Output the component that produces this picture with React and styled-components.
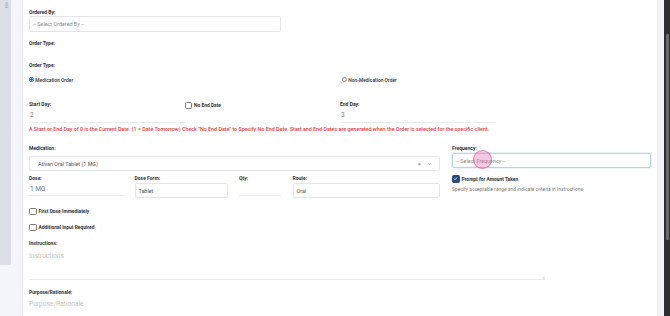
import React from "react";
import styled, { createGlobalStyle } from "styled-components";

const GlobalStyle = createGlobalStyle`
  html, body {
    margin: 0;
    padding: 0;
    background: #f4f5fa;
    font-family: Roboto, "Liberation Sans", Arial, sans-serif;
  }
`;

const Page = styled.div`
  display: flex;
  width: 670px;
  height: 316px;
  overflow: hidden;
  background: #f4f5fa;
`;

const Sidebar = styled.div`
  width: 11px;
  height: 265px;
  flex-shrink: 0;
  background: #dcdfe8;
  display: flex;
  justify-content: center;
  padding-top: 2px;
  box-sizing: border-box;
`;

const SideText = styled.span`
  writing-mode: vertical-rl;
  font-size: 2.6px;
  letter-spacing: 0.2px;
  color: #8a8f9c;
  height: 12px;
`;

const Gutter = styled.div`
  width: 11px;
  flex-shrink: 0;
`;

const Panel = styled.div`
  width: 635px;
  flex-shrink: 0;
  box-sizing: border-box;
  background: #fff;
  border-left: 1px solid #e7e8ef;
  padding: 8.5px 6px 0 6px;
  overflow: hidden;
`;

const RightStrip = styled.div`
  width: 7px;
  flex-shrink: 0;
  background: #f2f3fa;
`;

const Scrollbar = styled.div`
  width: 6px;
  flex-shrink: 0;
  background: #2d2d2d;
  padding-top: 34px;
  box-sizing: border-box;
`;

const Thumb = styled.div`
  width: 3px;
  height: 206px;
  margin-left: 2px;
  border-radius: 1px;
  background: #6b6b6b;
`;

const Label = styled.div`
  font-size: 5px;
  font-weight: 700;
  line-height: 6px;
  height: 6px;
  color: #333;
  white-space: nowrap;
  margin-top: ${({ $mt }) => $mt || 0}px;
`;

const SelectBox = styled.div`
  position: relative;
  box-sizing: border-box;
  width: ${({ $w }) => ($w ? `${$w}px` : "100%")};
  height: ${({ $h }) => $h || 16}px;
  margin-top: ${({ $mt }) => $mt || 0}px;
  border: 1px solid ${({ $focus }) => ($focus ? "#b9cdee" : "#e4e5ea")};
  border-radius: 2px;
  display: flex;
  align-items: center;
  padding: 0 ${({ $pl }) => $pl || 3}px;
  font-size: 5.4px;
  color: ${({ $value }) => ($value ? "#555" : "#8a8a8a")};
  white-space: nowrap;
  box-shadow: ${({ $focus }) => ($focus ? "0 0 0 0.5px #dbe6f7" : "none")};
`;

const SelectText = styled.span`
  flex: 1;
`;

const ClearMark = styled.span`
  font-size: 5.5px;
  color: #666;
  margin-right: 7px;
`;

const Spacer = styled.div`
  height: ${({ $h }) => $h}px;
`;

const RadioRow = styled.div`
  display: grid;
  grid-template-columns: 313px auto;
  margin-top: 9px;
  height: 6px;
`;

const RadioItem = styled.label`
  display: flex;
  align-items: center;
  gap: 1.5px;
  font-size: 4.9px;
  font-weight: 500;
  color: #333;
  white-space: nowrap;
`;

const RadioDot = styled.span`
  width: 4.8px;
  height: 4.8px;
  box-sizing: border-box;
  border-radius: 50%;
  border: ${({ $on }) => ($on ? "0.8px solid #1a6fe0" : "0.6px solid #8d8d8d")};
  background: ${({ $on }) =>
    $on ? "radial-gradient(circle, #1a6fe0 0 1.1px, #fff 1.3px)" : "#fff"};
`;

const DayRow = styled.div`
  display: grid;
  grid-template-columns: repeat(4, 155.5px);
  margin-top: 18px;
`;

const Col = styled.div`
  display: flex;
  flex-direction: column;
`;

const UnderInput = styled.div`
  box-sizing: border-box;
  width: ${({ $w }) => ($w ? `${$w}px` : "100%")};
  height: ${({ $h }) => $h || 15}px;
  margin-top: ${({ $mt }) => $mt || 0}px;
  border-bottom: 1px solid #ececee;
  display: flex;
  align-items: center;
  padding-left: ${({ $pl }) => $pl ?? 1}px;
  font-size: 6.6px;
  color: #777;
`;

const CheckRow = styled.label`
  display: flex;
  align-items: center;
  gap: 2px;
  height: 7.5px;
  margin-top: ${({ $mt }) => $mt || 0}px;
  font-size: 4.9px;
  font-weight: 700;
  color: #333;
  white-space: nowrap;
`;

const Box = styled.span`
  width: 7.5px;
  height: 7.5px;
  box-sizing: border-box;
  flex-shrink: 0;
  border-radius: 1.5px;
  border: 0.8px solid ${({ $on }) => ($on ? "#2b4a7d" : "#7a7a7a")};
  background: ${({ $on }) => ($on ? "#2b4a7d" : "#fff")};
  display: flex;
  align-items: center;
  justify-content: center;
`;

const Warning = styled.div`
  margin-top: 3.5px;
  font-size: 5.35px;
  font-weight: 500;
  line-height: 6px;
  color: #e23b40;
  white-space: nowrap;
`;

const MedGrid = styled.div`
  display: grid;
  grid-template-columns: 411px 199px;
  column-gap: 12px;
  margin-top: 13px;
`;

const DoseGrid = styled.div`
  display: grid;
  grid-template-columns: 94px 93px 42px 147px;
  column-gap: 11.5px;
  margin-top: 4px;
`;

const Hint = styled.div`
  margin-top: 3px;
  font-size: 4.9px;
  line-height: 6px;
  color: #7b7b7b;
  white-space: nowrap;
`;

const FieldWrap = styled.div`
  position: relative;
`;

const Pointer = styled.span`
  position: absolute;
  left: 21px;
  top: -1.5px;
  width: 19px;
  height: 19px;
  border-radius: 50%;
  background: rgba(232, 110, 175, 0.38);
  border: 0.8px solid rgba(214, 80, 150, 0.55);
  box-sizing: border-box;
`;

const TextArea = styled.div`
  position: relative;
  box-sizing: border-box;
  width: 516px;
  height: 31px;
  margin-top: 3px;
  border-bottom: 1px solid #ececee;
  padding-top: 3px;
  font-size: 6.6px;
  line-height: 8px;
  color: #c2c2c2;
`;

const Grip = styled.svg`
  position: absolute;
  right: 0;
  bottom: 0;
`;

const PlainInput = styled.div`
  margin-top: 5.5px;
  font-size: 6.6px;
  line-height: 8px;
  color: #c2c2c2;
`;

const Chevron = () => (
  <svg width="3" height="2" viewBox="0 0 6 4">
    <path d="M1 1l2 2 2-2" fill="none" stroke="#777" strokeWidth="1" />
  </svg>
);

const Check = () => (
  <svg width="5" height="5" viewBox="0 0 10 10">
    <path d="M2 5.2l2.1 2.1L8.2 3" fill="none" stroke="#fff" strokeWidth="1.8" />
  </svg>
);

const Checkbox = ({ on, children, mt }) => (
  <CheckRow $mt={mt}>
    <Box $on={on}>{on && <Check />}</Box>
    {children}
  </CheckRow>
);

export default function App() {
  return (
    <>
      <GlobalStyle />
      <Page>
        <Sidebar>
          <SideText>HIDE</SideText>
        </Sidebar>
        <Gutter />
        <Panel>
          <Label>Ordered By:</Label>
          <SelectBox $w={252} $mt={1}>-- Select Ordered By --</SelectBox>

          <Label $mt={8}>Order Type:</Label>
          <Spacer $h={16} />
          <Label>Order Type:</Label>

          <RadioRow>
            <RadioItem>
              <RadioDot $on />
              Medication Order
            </RadioItem>
            <RadioItem>
              <RadioDot />
              Non-Medication Order
            </RadioItem>
          </RadioRow>

          <DayRow>
            <Col>
              <Label>Start Day:</Label>
              <UnderInput $mt={1}>2</UnderInput>
            </Col>
            <Col>
              <Checkbox on={false} mt={1}>No End Date</Checkbox>
            </Col>
            <Col>
              <Label>End Day:</Label>
              <UnderInput $mt={1}>3</UnderInput>
            </Col>
          </DayRow>

          <Warning>
            A Start or End Day of 0 is the Current Date. (1 = Date Tomorrow) Check "No End Date" to Specify No End Date. Start and End Dates are generated when the Order is selected for the specific client.
          </Warning>

          <MedGrid>
            <Col>
              <Label>Medication:</Label>
              <SelectBox $mt={5} $h={15} $pl={8} $value>
                <SelectText>Ativan Oral Tablet (1 MG)</SelectText>
                <ClearMark>×</ClearMark>
                <Chevron />
              </SelectBox>
              <DoseGrid>
                <Col>
                  <Label>Dose:</Label>
                  <UnderInput $mt={1} $h={14}>1 MG</UnderInput>
                </Col>
                <Col>
                  <Label>Dose Form:</Label>
                  <SelectBox $mt={2} $h={15} $value>Tablet</SelectBox>
                </Col>
                <Col>
                  <Label>Qty:</Label>
                  <UnderInput $mt={1} $h={14} />
                </Col>
                <Col>
                  <Label>Route:</Label>
                  <SelectBox $mt={2} $h={15} $value>Oral</SelectBox>
                </Col>
              </DoseGrid>
            </Col>
            <Col>
              <Label>Frequency:</Label>
              <FieldWrap>
                <SelectBox $mt={2} $h={15} $focus>-- Select Frequency --</SelectBox>
                <Pointer />
              </FieldWrap>
              <Checkbox on mt={7}>Prompt for Amount Taken</Checkbox>
              <Hint>Specify acceptable range and indicate criteria in Instructions</Hint>
            </Col>
          </MedGrid>

          <Checkbox mt={9.5}>First Dose Immediately</Checkbox>
          <Checkbox mt={8.5}>Additional Input Required</Checkbox>

          <Label $mt={9}>Instructions:</Label>
          <TextArea>
            Instructions
            <Grip width="3" height="3" viewBox="0 0 6 6">
              <path d="M5.5 1.5L1.5 5.5M5.5 4L4 5.5" stroke="#888" strokeWidth="0.8" />
            </Grip>
          </TextArea>

          <Label $mt={8.5}>Purpose/Rationale:</Label>
          <PlainInput>Purpose/Rationale</PlainInput>
        </Panel>
        <RightStrip />
        <Scrollbar>
          <Thumb />
        </Scrollbar>
      </Page>
    </>
  );
}
